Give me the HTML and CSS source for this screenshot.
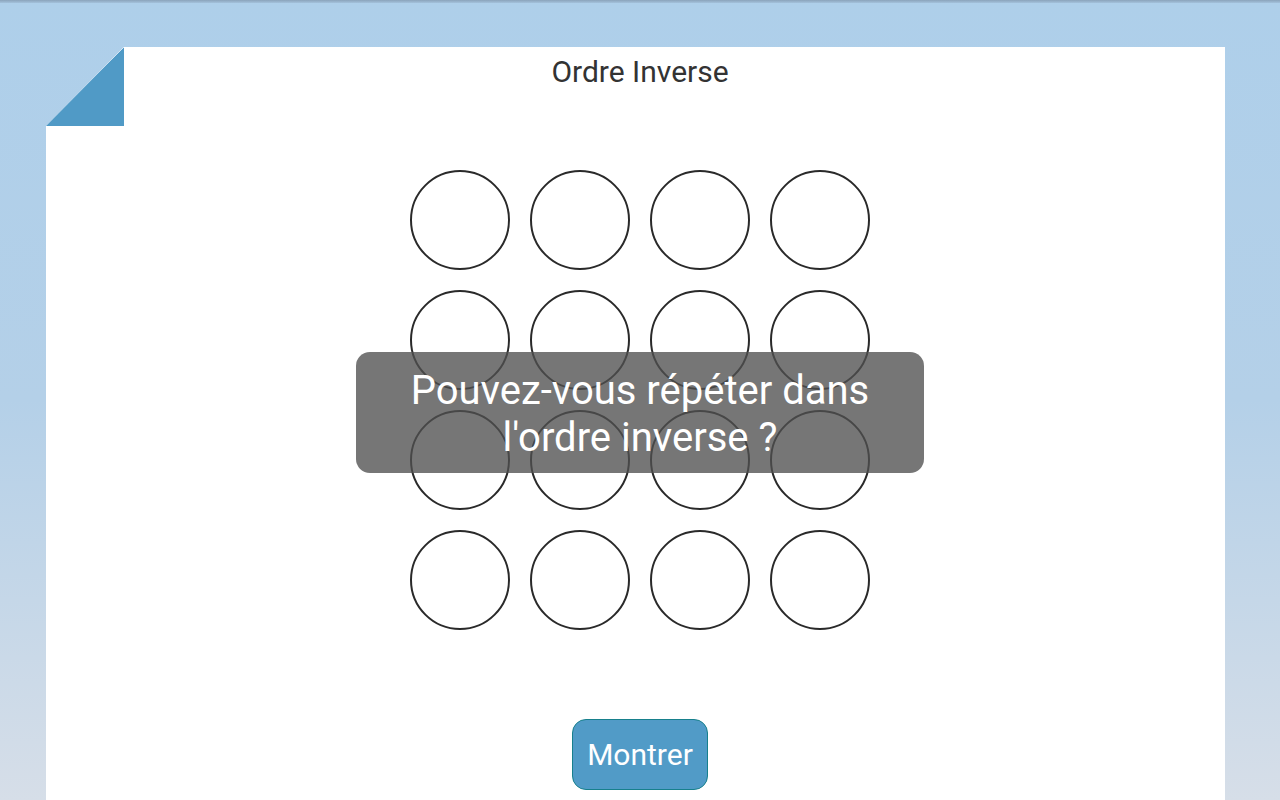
FILE: index.html
```html
<!DOCTYPE html>
<html lang="fr">
<head>
<meta charset="utf-8">
<title>Ordre Inverse</title>
<link rel="stylesheet" href="styles.css">
</head>
<body>
<div class="topline"></div>
<main class="page">
  <div class="fold"></div>
  <h1 class="title">Ordre Inverse</h1>
  <div class="board">
    <div class="grid">
      <div class="dot"></div><div class="dot"></div><div class="dot"></div><div class="dot"></div>
      <div class="dot"></div><div class="dot"></div><div class="dot"></div><div class="dot"></div>
      <div class="dot"></div><div class="dot"></div><div class="dot"></div><div class="dot"></div>
      <div class="dot"></div><div class="dot"></div><div class="dot"></div><div class="dot"></div>
    </div>
    <div class="toast">Pouvez-vous répéter dans<br>l'ordre inverse ?</div>
  </div>
  <button class="show">Montrer</button>
</main>
</body>
</html>
```
FILE: styles.css
```css
html, body {
  margin: 0;
  height: 100%;
  overflow: hidden;
}
body {
  background: linear-gradient(to bottom, #aecfea 0%, #b4d0e8 50%, #d6dee8 100%);
  font-family: Roboto, "Noto Sans", sans-serif;
  padding-top: 44px;
  box-sizing: border-box;
  position: relative;
}
.topline {
  position: absolute;
  left: 0;
  right: 0;
  top: 0;
  height: 3px;
  background: linear-gradient(to bottom, #8aa3bb, #a4c2dc);
}
.page {
  position: relative;
  margin: 3px 55px 0 46px;
  height: 760px;
  background: #fff;
  padding: 10px 0 0 9px;
  display: flex;
  flex-direction: column;
  align-items: center;
  clip-path: polygon(78px 0, 100% 0, 100% 100%, 0 100%, 0 79px);
}
.fold {
  position: absolute;
  left: 0;
  top: 0;
  width: 78px;
  height: 79px;
  background: linear-gradient(to bottom right, transparent 50%, #509ac6 50%);
}
.title {
  margin: 0;
  font-size: 30px;
  line-height: 30px;
  font-weight: 400;
  color: #333;
}
.board {
  position: relative;
  margin-top: 83px;
}
.grid {
  display: grid;
  grid-template-columns: repeat(4, 100px);
  grid-auto-rows: 100px;
  gap: 20px;
}
.dot {
  box-sizing: border-box;
  border: 2px solid #2a2a2a;
  border-radius: 50%;
}
.toast {
  position: absolute;
  left: -54px;
  top: 182px;
  width: 568px;
  height: 121px;
  box-sizing: border-box;
  padding-top: 15px;
  background: rgba(80, 80, 80, 0.78);
  border-radius: 14px;
  color: #fff;
  font-size: 40px;
  line-height: 47px;
  text-align: center;
}
.show {
  margin-top: 89px;
  width: 136px;
  height: 71px;
  border: 1px solid #17808c;
  border-radius: 14px;
  background: #519bc7;
  color: #fff;
  font-family: Roboto, "Noto Sans", sans-serif;
  font-size: 30px;
  padding: 0;
}
```
